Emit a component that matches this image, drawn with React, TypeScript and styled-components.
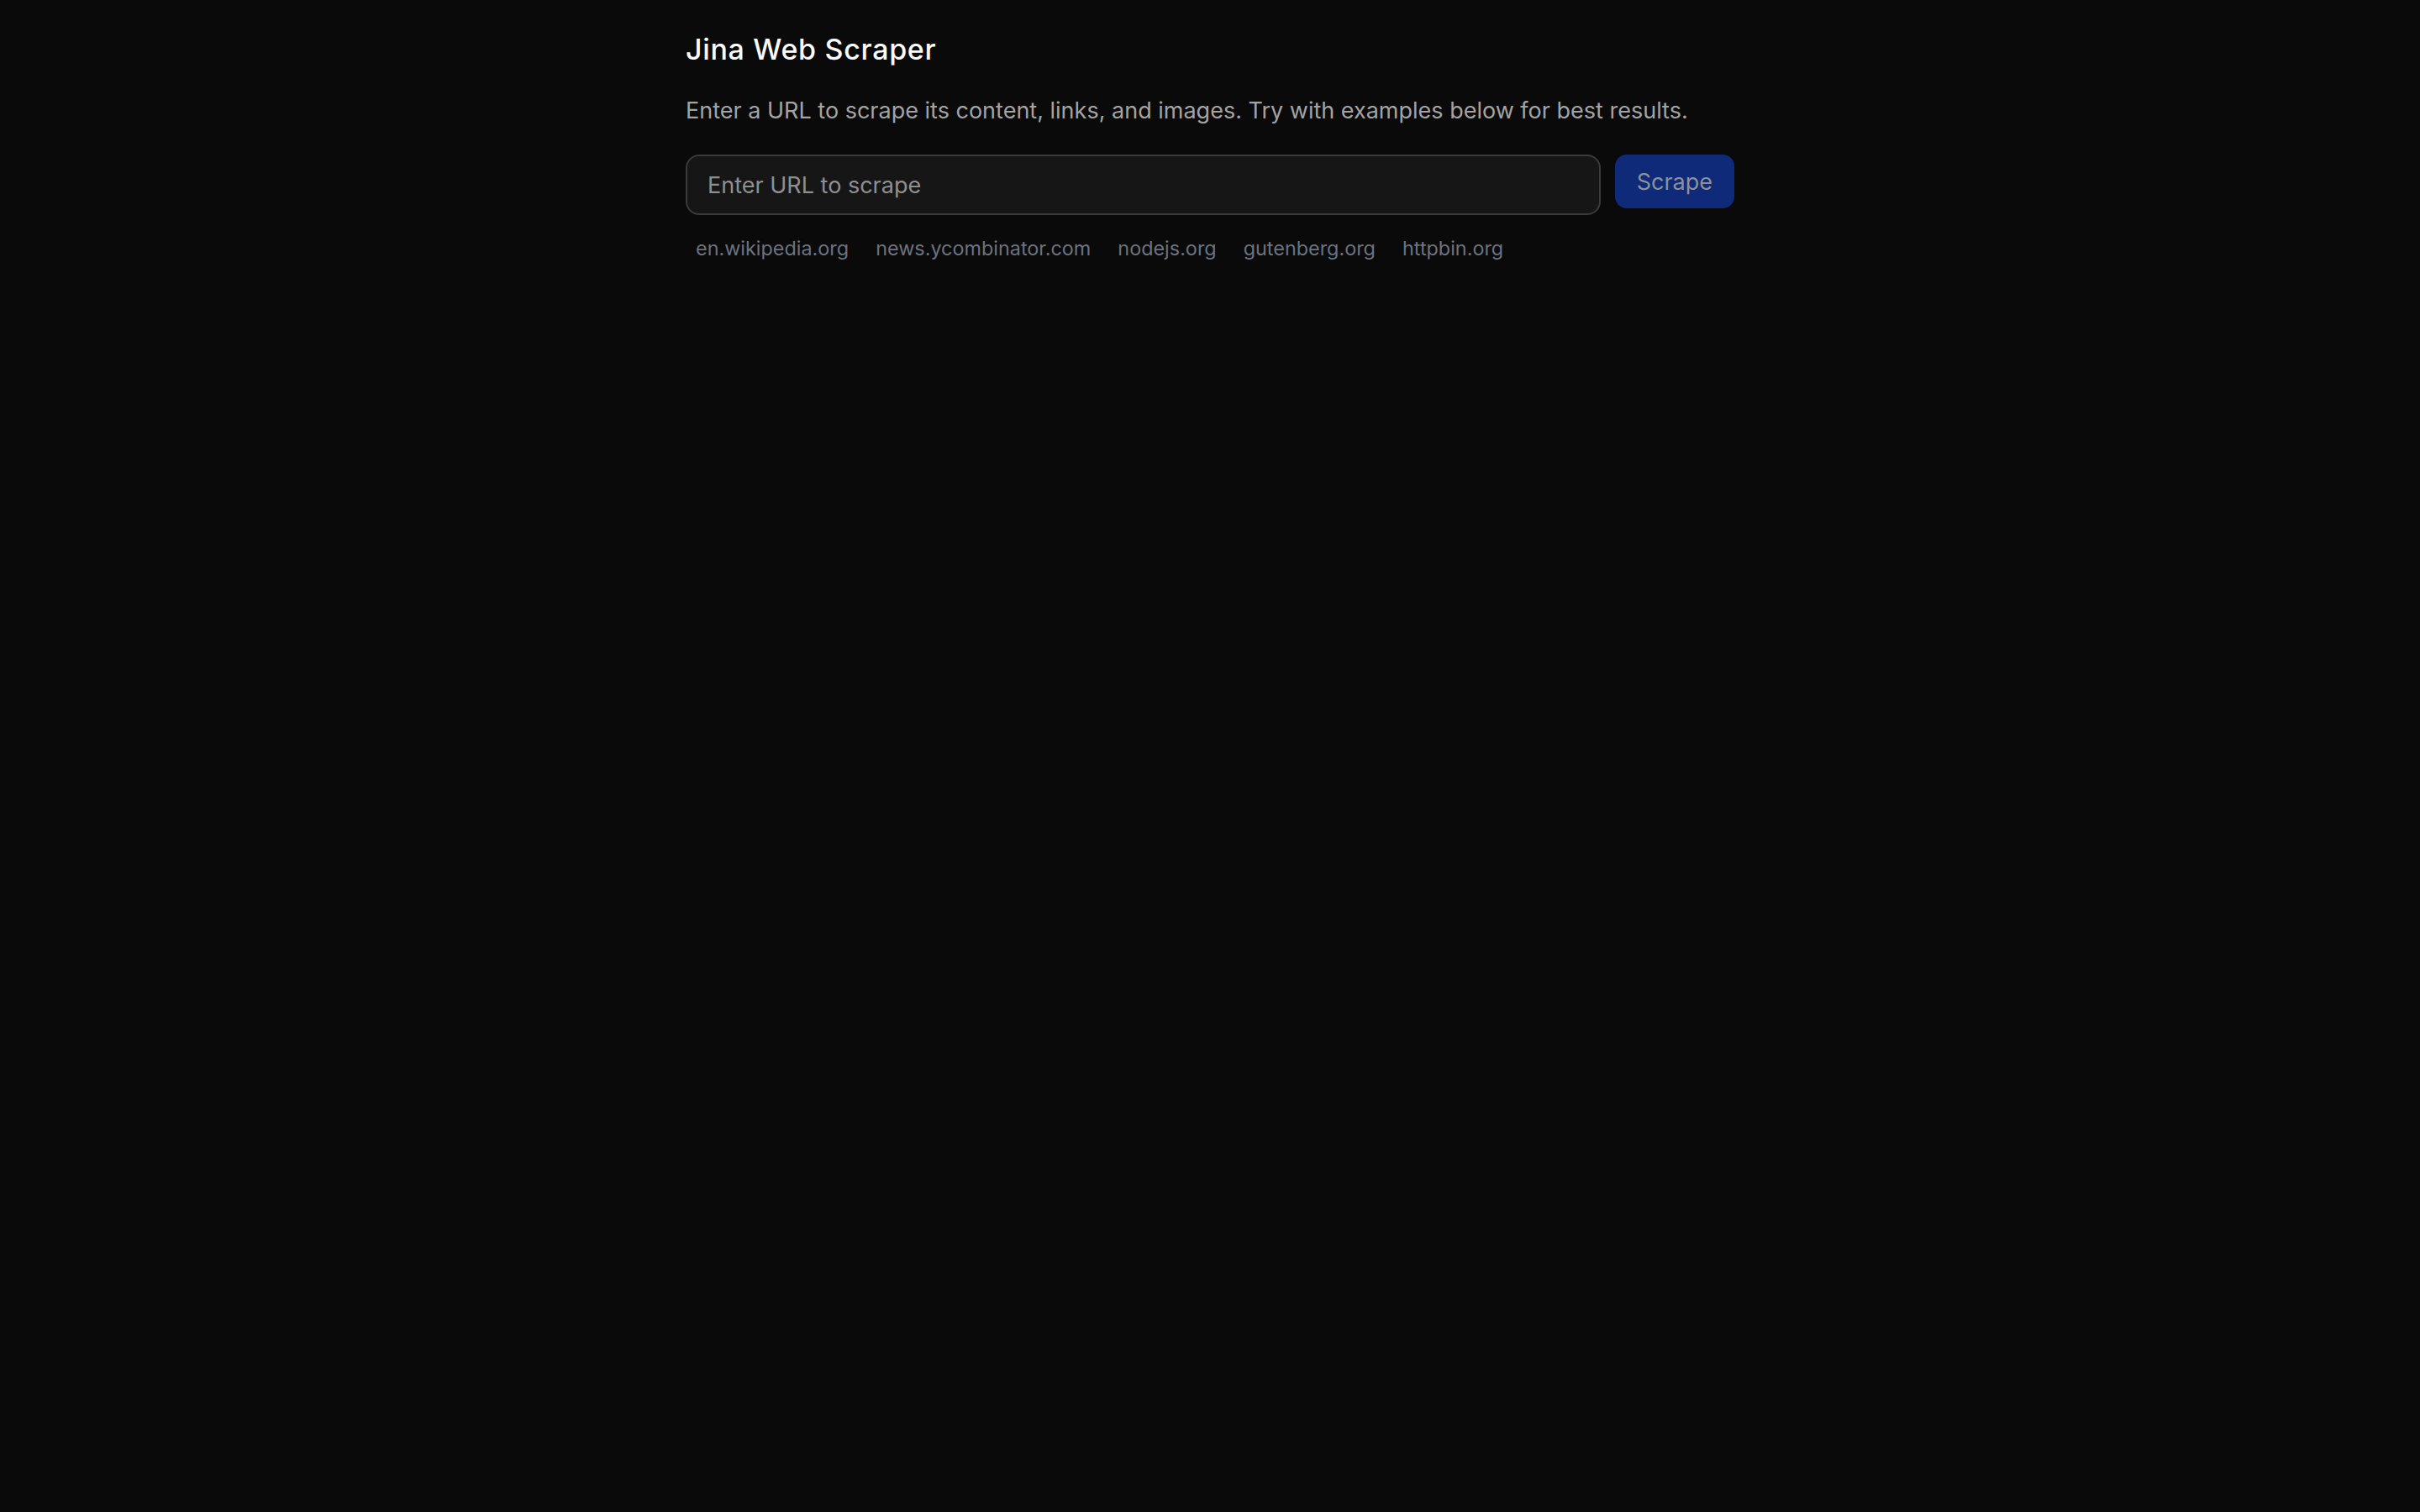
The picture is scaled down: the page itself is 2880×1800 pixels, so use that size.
import React, { useState } from "react";
import styled, { createGlobalStyle } from "styled-components";

const GlobalStyle = createGlobalStyle`
  html, body {
    margin: 0;
    padding: 0;
    background: #0a0a0a;
    min-height: 100%;
  }
  body {
    font-family: Inter, "Noto Sans", "Liberation Sans", sans-serif;
    color: #fafafa;
    -webkit-font-smoothing: antialiased;
  }
  * { box-sizing: border-box; }
`;

const Page = styled.div`
  min-height: 100vh;
  background: #0a0a0a;
`;

const Container = styled.main`
  max-width: 1344px;
  margin: 0 auto;
  padding: 32px 48px;
  display: flex;
  flex-direction: column;
`;

const Title = styled.h1`
  margin: 0;
  font-size: 34px;
  line-height: 54px;
  font-weight: 500;
  color: #fafafa;
  letter-spacing: 0.02em;
`;

const Subtitle = styled.p`
  margin: 26px 0 32px;
  font-size: 27px;
  line-height: 40px;
  color: #a3a3a3;
`;

const Form = styled.form`
  display: flex;
  align-items: flex-start;
  gap: 17px;
`;

const UrlInput = styled.input`
  flex: 1;
  min-width: 0;
  height: 72px;
  padding: 0 24px;
  font-family: inherit;
  font-size: 27px;
  color: #fafafa;
  background: #161616;
  border: 2px solid #3b3b3b;
  border-radius: 16px;
  outline: none;
  &::placeholder {
    color: #8f8f8f;
  }
`;

const ScrapeButton = styled.button`
  height: 64px;
  padding: 0 26px;
  font-family: inherit;
  font-size: 27px;
  font-weight: 400;
  color: #8d9099;
  background: #0f2a78;
  border: none;
  border-radius: 14px;
  cursor: not-allowed;
`;

const Examples = styled.div`
  display: flex;
  flex-wrap: wrap;
  gap: 8px;
  margin-top: 16px;
`;

const ExampleLink = styled.button`
  padding: 8px 12px;
  font-family: inherit;
  font-size: 23.4px;
  line-height: 32px;
  color: #6b7280;
  background: transparent;
  border: none;
  border-radius: 8px;
  cursor: pointer;
`;

const examples = [
  "en.wikipedia.org",
  "news.ycombinator.com",
  "nodejs.org",
  "gutenberg.org",
  "httpbin.org",
];

export default function App() {
  const [url, setUrl] = useState("");
  return (
    <Page>
      <GlobalStyle />
      <Container>
        <Title>Jina Web Scraper</Title>
        <Subtitle>
          Enter a URL to scrape its content, links, and images. Try with examples below for best results.
        </Subtitle>
        <Form onSubmit={(e) => e.preventDefault()}>
          <UrlInput
            type="text"
            placeholder="Enter URL to scrape"
            value={url}
            onChange={(e) => setUrl(e.target.value)}
          />
          <ScrapeButton type="submit" disabled={!url}>
            Scrape
          </ScrapeButton>
        </Form>
        <Examples>
          {examples.map((ex) => (
            <ExampleLink key={ex} type="button" onClick={() => setUrl(`https://${ex}`)}>
              {ex}
            </ExampleLink>
          ))}
        </Examples>
      </Container>
    </Page>
  );
}
